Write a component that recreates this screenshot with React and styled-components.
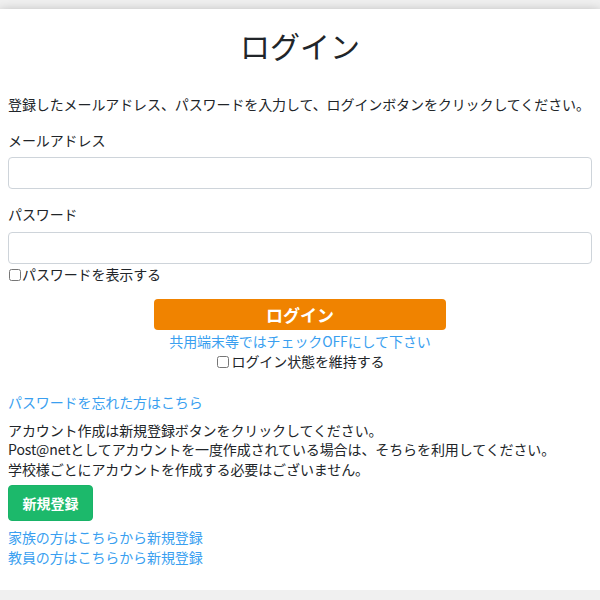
import styled, { createGlobalStyle } from "styled-components";

const GlobalStyle = createGlobalStyle`
  html, body {
    margin: 0;
    padding: 0;
    background: #f0f0f0;
  }
  body {
    font-family: "Noto Sans CJK JP", "Noto Sans", sans-serif;
    color: #212529;
    font-size: 14px;
    line-height: 1.4;
    letter-spacing: -0.1px;
  }
`;

const Card = styled.div`
  margin-top: 9px;
  background: #fff;
  padding: 19px 8px 22px;
  box-shadow: 0 4px 12px rgba(0, 0, 0, 0.4);
`;

const Title = styled.h1`
  margin: 0;
  text-align: center;
  font-size: 30px;
  font-weight: 400;
  line-height: 34px;
  letter-spacing: 0;
`;

const Text = styled.p`
  margin: ${(p) => p.$mt || 0}px 0 0;
  white-space: nowrap;
`;

const Label = styled.label`
  display: block;
  margin-top: ${(p) => p.$mt}px;
`;

const Input = styled.input`
  display: block;
  box-sizing: border-box;
  width: 100%;
  height: 32px;
  margin-top: 7px;
  border: 1px solid #ced4da;
  border-radius: 4px;
  background: #fff;
`;

const CheckRow = styled.label`
  display: flex;
  align-items: center;
  justify-content: ${(p) => (p.$center ? "center" : "flex-start")};
  margin-top: ${(p) => p.$mt || 0}px;
  line-height: ${(p) => (p.$center ? "21px" : "inherit")};
  input {
    width: 12px;
    height: 12px;
    margin: 0 ${(p) => (p.$center ? 3 : 1)}px 0 1px;
  }
`;

const Center = styled.div`
  display: flex;
  flex-direction: column;
  align-items: center;
  margin-top: 14.5px;
`;

const LoginButton = styled.button`
  width: 50%;
  height: 31px;
  border: none;
  border-radius: 4px;
  background: #f08300;
  color: #fff;
  font-family: inherit;
  font-size: 17px;
  font-weight: 700;
`;

const Note = styled.div`
  color: #3a9ff0;
  margin-top: 2px;
`;

const LinkText = styled.a`
  display: block;
  color: #3a9ff0;
  text-decoration: none;
  margin-top: ${(p) => p.$mt || 0}px;
`;

const SignupButton = styled.button`
  display: block;
  margin-top: 6px;
  width: 85px;
  height: 36px;
  border: 1px solid #19b368;
  border-radius: 4px;
  background: #1cb96b;
  color: #fff;
  font-family: inherit;
  font-size: 14px;
  font-weight: 700;
`;

const App = () => {
  return (
    <>
      <GlobalStyle />
      <Card>
        <Title>ログイン</Title>
        <Text $mt={33}>
          登録したメールアドレス、パスワードを入力して、ログインボタンをクリックしてください。
        </Text>
        <Label $mt={16}>メールアドレス</Label>
        <Input type="email" />
        <Label $mt={16}>パスワード</Label>
        <Input type="password" />
        <CheckRow $mt={1}>
          <input type="checkbox" />
          パスワードを表示する
        </CheckRow>
        <Center>
          <LoginButton>ログイン</LoginButton>
          <Note>共用端末等ではチェックOFFにして下さい</Note>
          <CheckRow $center>
            <input type="checkbox" />
            ログイン状態を維持する
          </CheckRow>
        </Center>
        <LinkText href="#" $mt={21}>パスワードを忘れた方はこちら</LinkText>
        <Text $mt={7.5}>アカウント作成は新規登録ボタンをクリックしてください。</Text>
        <Text>Post@netとしてアカウントを一度作成されている場合は、そちらを利用してください。</Text>
        <Text>学校様ごとにアカウントを作成する必要はございません。</Text>
        <SignupButton>新規登録</SignupButton>
        <LinkText href="#" $mt={7}>家族の方はこちらから新規登録</LinkText>
        <LinkText href="#">教員の方はこちらから新規登録</LinkText>
      </Card>
    </>
  );
};

export default App;
